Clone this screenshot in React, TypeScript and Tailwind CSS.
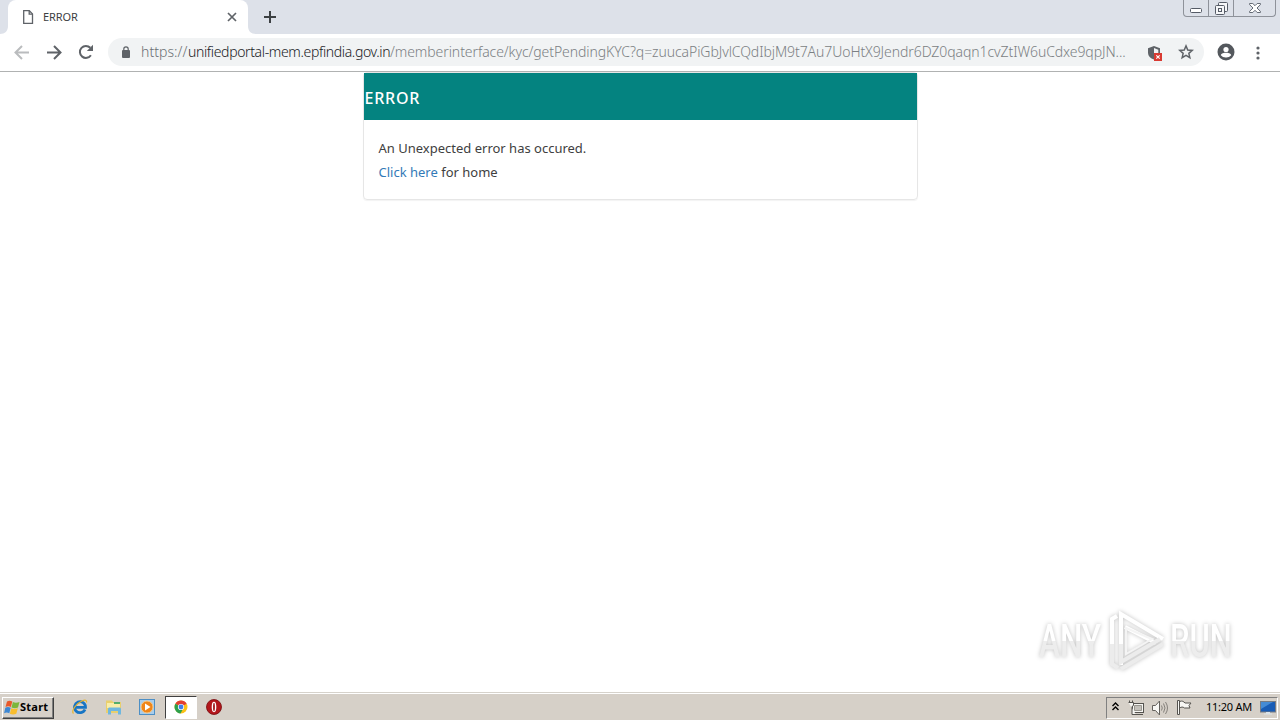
import type { ReactNode } from "react";

/* ─── Data ─── */
const URL_PARTS = [
    { text: "https://", className: "w-[47px] text-[#6b6f73] tracking-[0.05px]" },
    { text: "unifiedportal-mem.epfindia.gov.in", className: "w-[202px] text-[#202124] tracking-[-0.36px]" },
    { text: "/memberinterface/kyc/getPendingKYC?q=zuucaPiGbJvlCQdIbjM9t7Au7UoHtX9Jendr6DZ0qaqn1cvZtIW6uCdxe9qpJN...", className: "text-[#7b7f83] tracking-[-0.08px]" },
];

/* ─── Browser chrome ─── */
function TabStrip() {
    return (
        <div className="flex h-[34px] items-start justify-between bg-[#dde1e9]">
            <div className="flex h-full items-center">
                <svg className="h-full w-2" viewBox="0 0 8 34">
                    <path d="M8 26v8H0c5 0 8-3 8-8z" fill="#fff" />
                </svg>
                <div className="flex h-full w-60 items-center rounded-t-lg bg-white pl-[14px] pr-[11px]">
                    <svg className="h-[14px] w-3" viewBox="0 0 12 14" fill="none" stroke="#5f6368" strokeWidth="1.3">
                        <path d="M1.7.7h5.6l3.2 3.2v9.4H1.7z" />
                        <path d="M7.2.7v3.4h3.3" />
                    </svg>
                    <span className="ml-[9px] text-[11px] tracking-[-0.1px] text-[#3c4043]">ERROR</span>
                    <svg className="ml-auto size-[10px]" viewBox="0 0 10 10" stroke="#5f6368" strokeWidth="1.7">
                        <path d="M1 1l8 8M9 1L1 9" />
                    </svg>
                </div>
                <svg className="h-full w-2" viewBox="0 0 8 34">
                    <path d="M0 26v8h8c-5 0-8-3-8-8z" fill="#fff" />
                </svg>
                <svg className="ml-2 size-3" viewBox="0 0 12 12" stroke="#3c4043" strokeWidth="2">
                    <path d="M6 0v12M0 6h12" />
                </svg>
            </div>
            <div className="mr-1 flex h-[17px] w-[93px] rounded-b-[4px] border border-t-0 border-[#8e929a]">
                <div className="flex w-[25px] items-center justify-center border-r border-[#8e929a]">
                    <svg className="mt-1 h-[5px] w-3" viewBox="0 0 12 5" fill="#fff" stroke="#555b66">
                        <rect x=".5" y=".5" width="11" height="4" rx="1" />
                    </svg>
                </div>
                <div className="flex w-[25px] items-center justify-center border-r border-[#8e929a]">
                    <svg className="size-[13px]" viewBox="0 0 13 13" fill="#f5f6f8" stroke="#555b66">
                        <rect x="3.5" y=".5" width="9" height="9" rx="1" />
                        <rect x=".5" y="3.5" width="9" height="9" rx="1" />
                        <rect x="3.5" y="6.5" width="3" height="3" />
                    </svg>
                </div>
                <div className="flex flex-1 items-center justify-center">
                    <svg className="h-[10px] w-3" viewBox="0 0 12 10" fill="#fff" stroke="#555b66" strokeWidth=".9">
                        <path d="M.6.5h3.2L6 2.7 8.2.5h3.2v1.2L8 5l3.4 3.3v1.2H8.2L6 7.3 3.8 9.5H.6V8.3L4 5 .6 1.7z" />
                    </svg>
                </div>
            </div>
        </div>
    );
}

function AddressBar() {
    return (
        <div className="flex h-[38px] items-center border-b border-[#b0b2b2] bg-white pl-[14px]">
            <svg className="size-4" viewBox="0 0 16 16" fill="none" stroke="#babcbe" strokeWidth="2">
                <path d="M15 7.500H2M8 1L1.500 7.500 8 14" />
            </svg>
            <svg className="ml-4 size-4" viewBox="0 0 16 16" fill="none" stroke="#5f6368" strokeWidth="2">
                <path d="M1 7.500h13M8 1l6.500 6.500L8 14" />
            </svg>
            <svg className="mb-px ml-4 size-4" viewBox="0 0 16 16">
                <path d="M12.9 11.2A6 6 0 1 1 12.3 3.8" fill="none" stroke="#5f6368" strokeWidth="2" />
                <path d="M15 .8v6.2H8.8z" fill="#5f6368" />
            </svg>
            <div className="mb-px ml-[14px] flex h-7 w-[1096px] items-center rounded-full bg-[#f1f3f4] pl-[14px] pr-[10px]">
                <svg className="h-3 w-2" viewBox="0 0 8 12">
                    <rect y="4" width="8" height="8" rx="1" fill="#5f6368" />
                    <path d="M1.8 5V3a2.2 2.2 0 0 1 4.4 0v2" fill="none" stroke="#5f6368" strokeWidth="1.2" />
                </svg>
                <div className="ml-[11px] flex w-[986px] whitespace-pre text-[14px] font-light leading-5">
                    {URL_PARTS.map(({ text, className }) => (
                        <span key={text} className={className}>{text}</span>
                    ))}
                </div>
                <svg className="ml-auto mt-[2px] h-[15px] w-[14px]" viewBox="0 0 14 15">
                    <path d="M6 0l6 2.3v4.2C12 10 9.5 12.6 6 13.5 2.5 12.6 0 10 0 6.5V2.3z" fill="#5f6368" />
                    <path d="M6 2l4.3 1.7v4H6z" fill="#f1f3f4" />
                    <rect x="6" y="7" width="8" height="8" fill="#d93a32" />
                    <path d="M8.3 9.3l3.4 3.4m0-3.4l-3.4 3.4" stroke="#fff" strokeWidth="1.1" />
                </svg>
                <svg className="ml-4 size-4" viewBox="0 0 16 16" fill="none" stroke="#5f6368" strokeWidth="1.5">
                    <path d="M8 1.900l1.750 4.100 4.450.4-3.350 2.950 1 4.350L8 11.400l-3.850 2.300 1-4.350L1.800 6.400l4.450-.4z" />
                </svg>
            </div>
            <svg className="mb-px ml-[13px] size-[18px]" viewBox="0 0 18 18">
                <circle cx="9" cy="9" r="8.5" fill="#54585d" />
                <circle cx="9" cy="6.5" r="2.6" fill="#fff" />
                <path d="M3.8 12.200c.3-2 3.500-2.400 5.200-2.400s4.900.4 5.200 2.400A6.500 6.500 0 0 1 9 14.500 6.500 6.500 0 0 1 3.800 12.200z" fill="#fff" />
            </svg>
            <svg className="ml-[21px] h-[14px] w-1" viewBox="0 0 4 14" fill="#5f6368">
                <circle cx="2" cy="2" r="1.6" />
                <circle cx="2" cy="7" r="1.6" />
                <circle cx="2" cy="12" r="1.6" />
            </svg>
        </div>
    );
}

/* ─── Page ─── */
function ErrorCard() {
    return (
        <div className="mx-auto h-[128px] w-[555px] rounded-[4px] border border-[#e6e6e6] text-[#404040] shadow-[0_1px_1px_rgba(0,0,0,0.05)]">
            <div className="flex h-[47px] items-center bg-[#048380] pt-[2px]">
                <h1 className="pl-px text-[16px] font-medium tracking-[0.75px] text-white">ERROR</h1>
            </div>
            <div className="pl-[15px] pt-4 text-[13px] leading-6">
                <p>An Unexpected error has occured.</p>
                <p><a href="#" className="text-[#337ab7]">Click here</a> for home</p>
            </div>
        </div>
    );
}

function Watermark() {
    const word = "inline-block origin-left bg-gradient-to-b from-white from-50% to-[#ededed] to-50% bg-clip-text text-[47px] font-medium leading-[48px] text-transparent";
    return (
        <div className="absolute right-[44px] bottom-[19px] flex h-16 w-[197px] items-center font-['Roboto'] drop-shadow-[0_0_2px_rgba(0,0,0,0.25)]">
            <div className="w-[70px]">
                <span className={`${word} scale-x-[0.67]`}>ANY</span>
            </div>
            <svg className="h-[62px] w-[58px] shrink-0" viewBox="0 0 58 62" fill="none" strokeWidth="4">
                <path d="M12 55V4l42 25" stroke="#fff" />
                <path d="M3 54V9l5-3M16 17l31 16" stroke="#fff" />
                <path d="M3 34v20l6 4M12 34v18l39-23M12 59l42-25" stroke="#ececec" />
                <path d="M17 18v26l26-15z" stroke="#f4f4f4" strokeWidth="2" />
            </svg>
            <div className="ml-[3px] w-[66px]">
                <span className={`${word} scale-x-[0.66]`}>RUN</span>
            </div>
        </div>
    );
}

/* ─── Taskbar ─── */
function TaskButton({ active, children }: { active?: boolean; children: ReactNode }) {
    return (
        <div className={active
            ? "flex h-[23px] w-8 items-center justify-center border border-t-[#404040] border-l-[#404040] border-r-white border-b-white bg-white"
            : "flex h-[23px] w-8 items-center justify-center"}>
            {children}
        </div>
    );
}

function Taskbar() {
    return (
        <div className="flex h-7 items-center border-t border-[#d6d2cb] bg-[#d6d0c8] pr-[2px] pl-[2px] shadow-[inset_0_1px_0_#fff]">
            <div className="mt-[2px] flex h-[22px] w-[52px] items-center border border-t-white border-l-white border-r-[#404040] border-b-[#404040] pl-px shadow-[inset_-1px_-1px_0_#808080]">
                <svg className="size-4 shrink-0" viewBox="0 0 16 16">
                    <path d="M3 1.500c2-1.300 3.500-1 5.300 0L6.900 7c-1.700-1-3.400-1-5.400 0z" fill="#e8592b" />
                    <path d="M8.900 2c2 1 4 1 6.600 0L14 7.500c-2.300 1-4.500.9-6.500 0z" fill="#7cb63c" />
                    <path d="M1.300 7.700c1.800-1.100 3.500-1 5.400 0L5.300 13.300c-1.700-1-3.400-1-5.200 0z" fill="#3d87d3" />
                    <path d="M7.300 8.200c2 1 4 1 6.500 0l-1.500 5.600c-2.200 1-4.400.9-6.400 0z" fill="#f9bd2c" />
                </svg>
                <span className="text-[11px] font-bold tracking-[0.25px] text-black">Start</span>
            </div>
            <div className="ml-[10px] mt-px flex gap-[1.5px]">
                <TaskButton>
                    <svg className="size-4" viewBox="0 0 16 16" fill="none">
                        <path d="M13 10.5A5.500 5.500 0 1 1 13.500 8.300H4" stroke="#1875c4" strokeWidth="2.8" />
                        <path d="M1.500 14.500C-1 12 4 4.500 10 2c3-1.300 5-1.200 4.500 1.500" stroke="#e7b42e" strokeWidth="1.2" />
                    </svg>
                </TaskButton>
                <TaskButton>
                    <svg className="size-4" viewBox="0 0 16 16">
                        <path d="M0 1.500h6l1 1.500h8V14H0z" fill="#e9cf6d" />
                        <path d="M1 4h13v5H1z" fill="#f8eda9" />
                        <path d="M8 3h6v2H8z" fill="#55ad6b" />
                        <path d="M2 15.500V10C2 9.200 2.700 8.500 3.500 8.500h10c.8 0 1.500.7 1.500 1.500v5.500h-3V12H5v3.500z" fill="#6fb7df" />
                    </svg>
                </TaskButton>
                <TaskButton>
                    <svg className="size-4" viewBox="0 0 16 16">
                        <rect x=".5" y=".5" width="15" height="15" fill="#a8cdec" stroke="#4d8fc5" />
                        <circle cx="8" cy="8" r="6" fill="#ef8519" stroke="#f9c782" />
                        <path d="M6 4.500L11.500 8 6 11.500z" fill="#fff" />
                    </svg>
                </TaskButton>
                <TaskButton active>
                    <svg className="size-[14px]" viewBox="0 0 14 14">
                        <circle cx="7" cy="7" r="6.5" fill="#fbc116" />
                        <path d="M7 7L1.370 3.750A6.500 6.500 0 0 1 12.630 3.750z" fill="#e23f32" />
                        <path d="M7 7L1.370 3.750A6.500 6.500 0 0 0 6.500 13.500L9 9z" fill="#2ca04d" />
                        <circle cx="7" cy="7" r="3.1" fill="#fff" />
                        <circle cx="7" cy="7" r="2.4" fill="#3f7ee8" />
                    </svg>
                </TaskButton>
                <TaskButton>
                    <svg className="size-4" viewBox="0 0 16 16">
                        <circle cx="8" cy="8" r="7.5" fill="#b3161b" stroke="#76090d" strokeWidth=".8" />
                        <ellipse cx="8" cy="8" rx="2.3" ry="5.2" fill="#fff" />
                        <ellipse cx="8" cy="8" rx=".9" ry="4.3" fill="#9d1015" />
                    </svg>
                </TaskButton>
            </div>
            <div className="ml-auto mt-[2px] flex h-[22px] w-[172px] items-center border border-t-[#808080] border-l-[#808080] border-r-white border-b-white pl-[5px]">
                <svg className="mb-[2px] h-[9px] w-[7px]" viewBox="0 0 7 9" fill="none" stroke="#000" strokeWidth="1.4">
                    <path d="M.5 4l3-3 3 3M.5 8l3-3 3 3" />
                </svg>
                <svg className="ml-[9px] size-4" viewBox="0 0 16 16" fill="#f6f5f2" stroke="#55534f">
                    <rect x="4.5" y="3.5" width="11" height="9" />
                    <path d="M6.500 5.500h7v5h-7z" fill="#c4c1bb" stroke="#99968f" />
                    <path d="M7 14.500h8M.5 2.500h5v3l-1.500 1v8h4" />
                    <path d="M1.500 2.500V.5M4.500 2.500V.5" />
                </svg>
                <svg className="ml-2 size-4" viewBox="0 0 16 16" fill="none" stroke="#85817b">
                    <path d="M.5 5.500h3l4-4.500v14l-4-4.500h-3z" fill="#f8f7f4" stroke="#64615c" />
                    <path d="M9.500 5.500q1.500 2.500 0 5M11.500 3.500q3 4.500 0 9M13.500 2q4 6 0 12" />
                </svg>
                <svg className="ml-2 size-4" viewBox="0 0 16 16" fill="#f8f7f4" stroke="#55534f">
                    <path d="M1.500.5h2v14h-2zM3.500 1.500c3-1 4 0 5.500 1.500h6l-2 2.500 1 2.500H8.500c-2-1.500-3-1-5 0z" />
                </svg>
                <span className="ml-[14px] w-[50px] whitespace-nowrap text-[11px] tracking-[-0.25px] text-black">11:20 AM</span>
                <svg className="ml-1 h-[14px] w-4" viewBox="0 0 16 14">
                    <rect x=".5" y=".5" width="15" height="10.5" fill="#195cb5" stroke="#777b82" />
                    <path d="M1 1h12L1 8z" fill="#458bd5" />
                    <path d="M6 11h4v1.500h2v1H4v-1h2z" fill="#dce3e8" />
                </svg>
            </div>
        </div>
    );
}

export default function App() {
    return (
        <div className="flex h-[720px] w-[1280px] flex-col overflow-hidden bg-white font-['Noto_Sans',sans-serif]">
            <TabStrip />
            <AddressBar />
            <main className="relative flex-1">
                <ErrorCard />
                <Watermark />
            </main>
            <Taskbar />
        </div>
    );
}
